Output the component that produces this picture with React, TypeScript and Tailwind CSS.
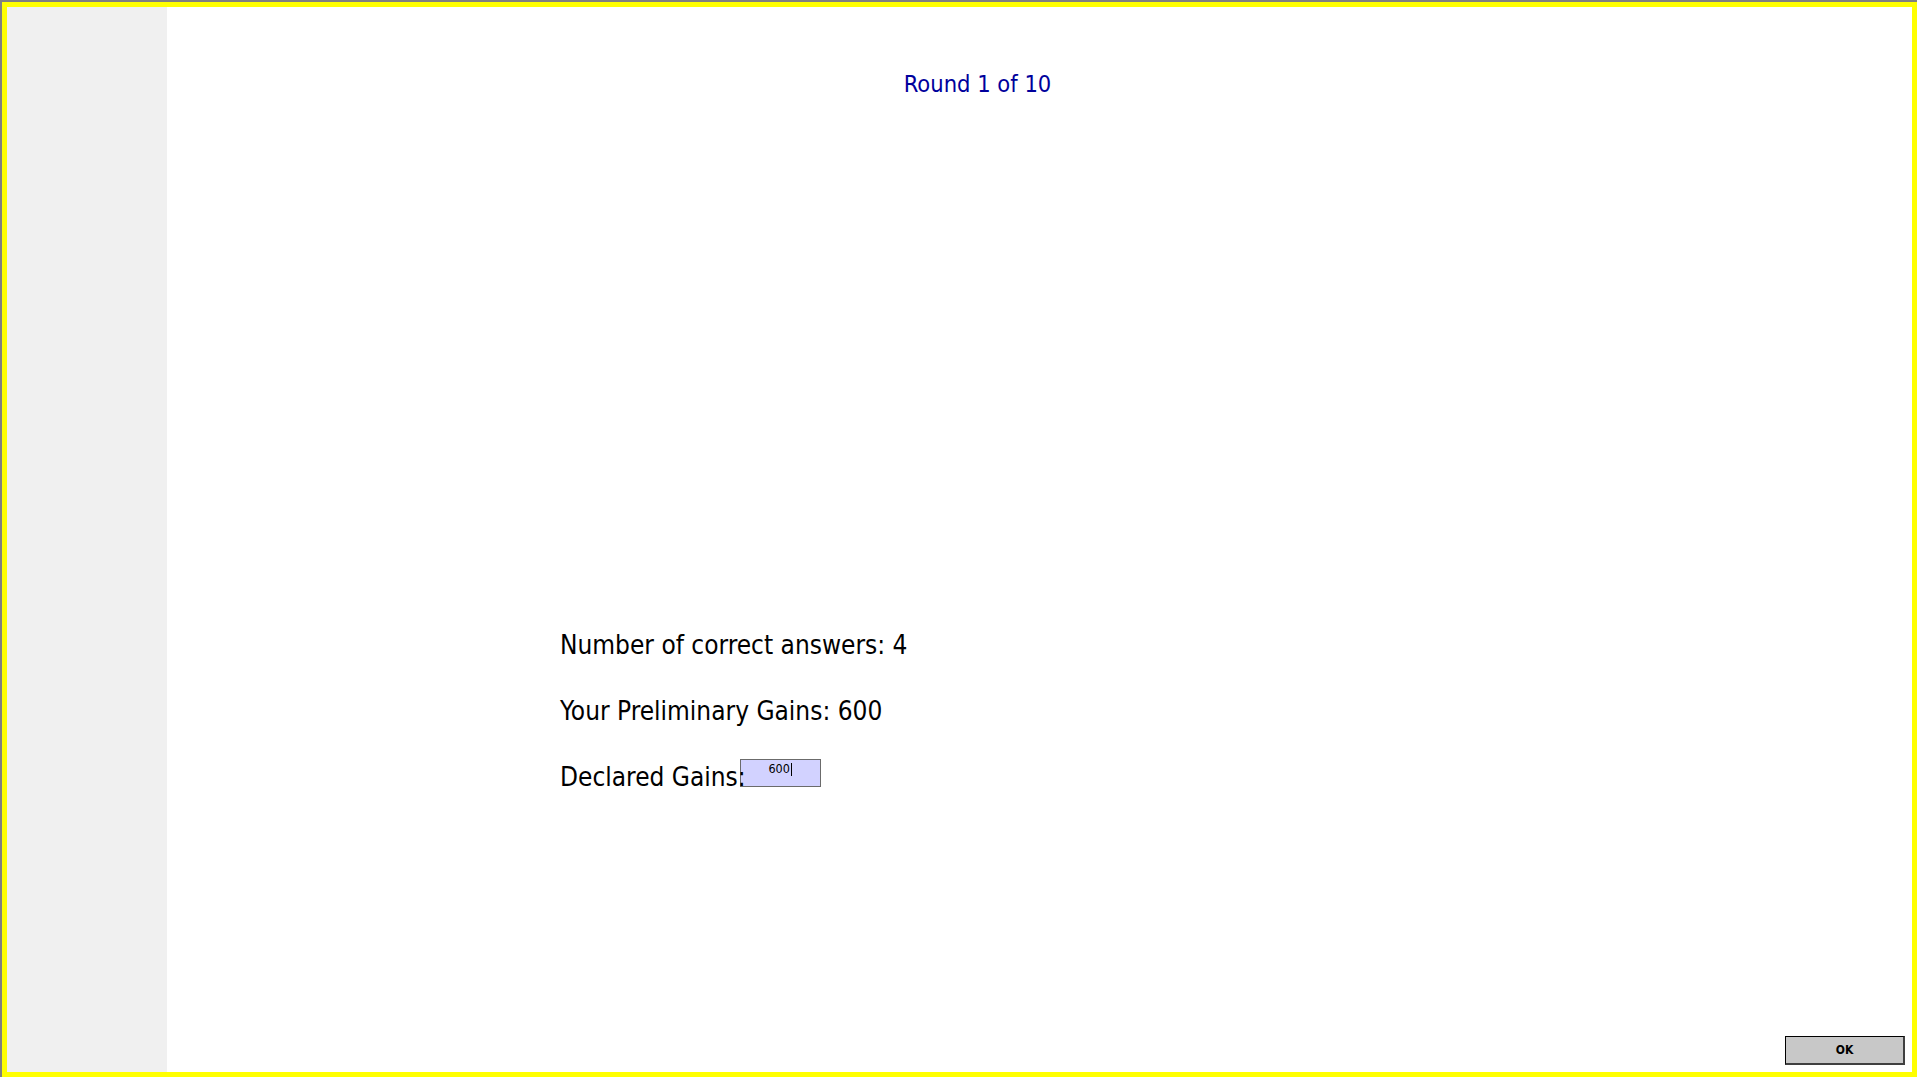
export default function App() {
  const font = "font-['DejaVu_Sans_Condensed','DejaVu_Sans',sans-serif]";

  return (
    <div className={`h-[1080px] w-[1920px] bg-white ${font}`}>
      <div className="h-[1077px] w-[1917px] border-l-2 border-t-2 border-[#808080]">
        <div className="flex h-full w-full border-[5px] border-[#ffff00] bg-white">
          {/* left strip */}
          <div className="w-[160px] shrink-0 bg-[#f0f0f0]" />

          {/* main panel */}
          <div className="flex flex-1 flex-col">
            <div className="pt-[63px] pr-[124px] text-center text-[23.5px] leading-[28px] text-[#00009c]">
              Round 1 of 10
            </div>

            <div className="mt-[531px] flex flex-col gap-[34px] pl-[393px] text-[26px] leading-[32px] text-black">
              <div>Number of correct answers: 4</div>
              <div>Your Preliminary Gains: 600</div>
              <div className="flex items-start">
                <span className="relative z-10">Declared Gains:</span>
                <div className="-ml-[6px] -mt-[2px] flex h-[28px] w-[81px] items-start justify-center border border-[#6b6b6b] bg-[#d2d2ff] pt-[2px] text-[12.5px] leading-[14px]">
                  <span>600</span>
                  <span className="ml-[1px] mt-[1px] h-[13px] w-px bg-black" />
                </div>
              </div>
            </div>

            <div className="flex-1" />

            <div className="flex justify-end pb-[7px] pr-[7px]">
              <button className="h-[29px] w-[120px] border-b-2 border-l border-r-2 border-t border-b-[#404040] border-l-black border-r-[#404040] border-t-black bg-[#c8c8c8] text-[12px] font-bold text-black">
                OK
              </button>
            </div>
          </div>
        </div>
      </div>
    </div>
  );
}
